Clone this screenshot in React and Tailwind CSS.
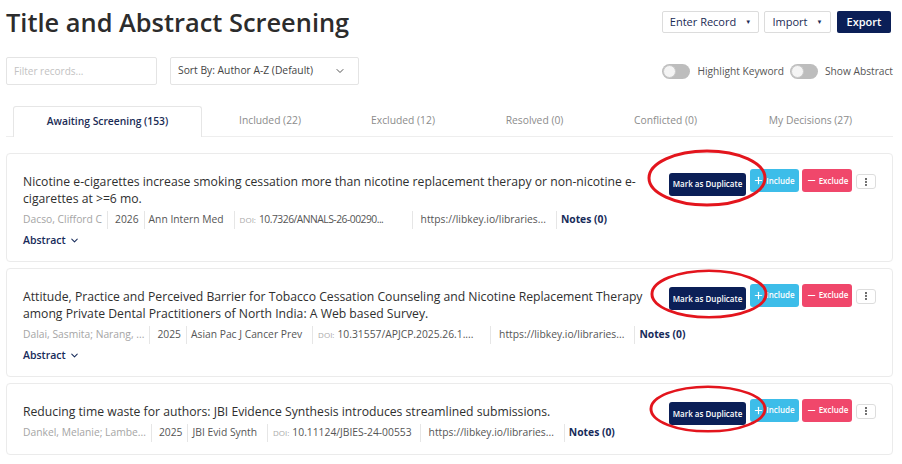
import { ChevronDown, Plus, Minus, EllipsisVertical } from "lucide-react";

const records = [
  {
    title:
      "Nicotine e-cigarettes increase smoking cessation more than nicotine replacement therapy or non-nicotine e-cigarettes at >=6 mo.",
    authors: "Dacso, Clifford C",
    year: "2026",
    journal: "Ann Intern Med",
    doi: "10.7326/ANNALS-26-00290...",
    doiText: "tracking-[-0.5px]",
    doiBox: "w-[177px]",
    abstract: true,
    ring: "left-[-22px] top-[-20px] w-[120px] h-[58px]",
  },
  {
    title:
      "Attitude, Practice and Perceived Barrier for Tobacco Cessation Counseling and Nicotine Replacement Therapy among Private Dental Practitioners of North India: A Web based Survey.",
    authors: "Dalai, Sasmita; Narang, ...",
    year: "2025",
    journal: "Asian Pac J Cancer Prev",
    doi: "10.31557/APJCP.2025.26.1....",
    doiText: "",
    doiBox: "w-[177px]",
    abstract: true,
    ring: "left-[-19px] top-[-15px] w-[118px] h-[50px]",
  },
  {
    title:
      "Reducing time waste for authors: JBI Evidence Synthesis introduces streamlined submissions.",
    authors: "Dankel, Melanie; Lambe...",
    year: "2025",
    journal: "JBI Evid Synth",
    doi: "10.11124/JBIES-24-00553",
    doiText: "",
    doiBox: "",
    abstract: false,
    ring: "left-[-20px] top-[-14px] w-[118px] h-[48px]",
  },
];

const tabs = [
  { label: "Awaiting Screening (153)", w: "w-[189px]" },
  { label: "Included (22)", w: "w-[136px]" },
  { label: "Excluded (12)", w: "w-[130px]" },
  { label: "Resolved (0)", w: "w-[133px]" },
  { label: "Conflicted (0)", w: "w-[129px]" },
  { label: "My Decisions (27)", w: "w-[161px]" },
];

const Toggle = ({ label }) => (
  <div className="flex items-center gap-[7px]">
    <div className="w-[28px] h-[15px] rounded-full bg-[#bdbdbd] flex items-center px-[1px]">
      <div className="w-[13px] h-[13px] rounded-full bg-[#f4f4f4] border border-[#c9c9c9]" />
    </div>
    <span className="text-[10.2px] text-[#555]">{label}</span>
  </div>
);

const Sep = () => <span className="w-px self-stretch shrink-0 bg-[#e6e6e6]" />;

const RecordCard = ({ rec }) => (
  <div className="border border-[#ebebeb] rounded-[4px] bg-white px-4 pt-[15px] flex gap-5 pb-[12px]">
    <div className="flex-1 min-w-0 pt-[4px]">
      <h3 className="text-[12.2px] leading-[17px] font-medium text-[#2f2f2f]">
        {rec.title}
      </h3>
      <div className="flex items-center h-[18px] mt-[4px] text-[10.3px] text-[#555] whitespace-nowrap">
        <span className="text-[#a5a5a5] shrink-0 pr-[5px]">{rec.authors}</span>
        <Sep />
        <span className="shrink-0 pl-[7px] pr-[5px]">{rec.year}</span>
        <Sep />
        <span className="shrink-0 pl-[4px] pr-[10px]">{rec.journal}</span>
        <Sep />
        <span className={`shrink-0 flex items-center pl-[5px] pr-[8px] ${rec.doiBox}`}>
          <span className="text-[8px] text-[#aaa] mr-[3px]">DOI:</span>
          <span className={rec.doiText}>{rec.doi}</span>
        </span>
        <Sep />
        <span className="shrink-0 pl-[8px] pr-[10px]">https://libkey.io/libraries...</span>
        <Sep />
        <span className="shrink-0 pl-[4px] font-bold text-[#172b5a]">Notes (0)</span>
      </div>
      {rec.abstract && (
        <div className="flex items-center gap-[3px] mt-[4px] text-[10.5px] font-semibold text-[#172b5a]">
          Abstract <ChevronDown className="w-[11px] h-[11px]" strokeWidth={2.2} />
        </div>
      )}
    </div>
    <div className="flex items-start shrink-0 gap-[3.5px]">
      <div className="relative">
        <button className="w-[77px] h-[23px] rounded-[3px] bg-[#0b1f57] text-white text-[8px] font-semibold">
          Mark as Duplicate
        </button>
        <svg
          className={`absolute pointer-events-none ${rec.ring}`}
          viewBox="0 0 120 58"
          preserveAspectRatio="none"
        >
          <ellipse
            cx="60"
            cy="29"
            rx="58"
            ry="27"
            fill="none"
            stroke="#e3151d"
            strokeWidth="3"
          />
        </svg>
      </div>
      <button className="w-[49px] h-[23px] rounded-[3px] bg-[#3dbde9] text-white text-[8px] font-semibold flex items-center justify-center gap-[2px]">
        <Plus className="w-[11px] h-[11px]" strokeWidth={2.5} />
        Include
      </button>
      <button className="w-[50px] h-[23px] rounded-[3px] bg-[#f0476b] text-white text-[8px] font-semibold flex items-center justify-center gap-[2px]">
        <Minus className="w-[11px] h-[11px]" strokeWidth={2.5} />
        Exclude
      </button>
      <button className="ml-[0.5px] mt-[5px] w-[20px] h-[15px] rounded-[3px] border border-[#ddd] bg-white flex items-center justify-center text-[#444]">
        <EllipsisVertical className="w-[10px] h-[10px]" strokeWidth={3} />
      </button>
    </div>
  </div>
);

export default function App() {
  return (
    <div className="w-[902px] h-[464px] overflow-hidden bg-white font-['Open_Sans',sans-serif] pl-[6px] pr-[9px]">
      {/* Header */}
      <div className="flex items-start justify-between pt-[4px]">
        <h1 className="text-[25.4px] leading-[36px] font-semibold text-[#2c2c2c]">
          Title and Abstract Screening
        </h1>
        <div className="flex items-center gap-[5px] mt-[7px] mr-[2px]">
          <button className="h-[22px] w-[97px] border border-[#dcdcdc] rounded-[2px] text-[11px] font-medium text-[#1a2b55] flex items-center justify-center gap-[9px]">
            Enter Record <span className="text-[6px]">▼</span>
          </button>
          <button className="h-[22px] w-[67px] border border-[#dcdcdc] rounded-[2px] text-[11px] font-medium text-[#1a2b55] flex items-center justify-center gap-[9px]">
            Import <span className="text-[6px]">▼</span>
          </button>
          <button className="h-[22px] w-[54px] rounded-[2px] bg-[#0b1f57] text-[11px] font-semibold text-white ml-[1px]">
            Export
          </button>
        </div>
      </div>

      {/* Filters */}
      <div className="flex items-center justify-between mt-[17px]">
        <div className="flex items-center gap-[13px]">
          <div className="w-[151px] h-[28px] border border-[#e4e4e4] rounded-[2px] flex items-center px-[7px] text-[10px] text-[#c2c2c2]">
            Filter records...
          </div>
          <div className="w-[189px] h-[28px] border border-[#e4e4e4] rounded-[2px] flex items-center justify-between pl-[7px] pr-[12px] text-[10.3px] text-[#444]">
            Sort By: Author A-Z (Default)
            <ChevronDown className="w-[12px] h-[12px] text-[#555]" strokeWidth={2} />
          </div>
        </div>
        <div className="flex items-center gap-[6px] mt-[2px]">
          <Toggle label="Highlight Keyword" />
          <Toggle label="Show Abstract" />
        </div>
      </div>

      {/* Tabs */}
      <div className="flex border-b border-[#eeeeee] mt-[21px] pl-[7px] h-[31px]">
        {tabs.map((t, i) => (
          <div
            key={t.label}
            className={
              i === 0
                ? `${t.w} shrink-0 flex items-center justify-center text-[10.3px] font-semibold text-[#1a2b55] border border-b-0 border-[#e6e6e6] rounded-t-[3px] bg-white -mb-px`
                : `${t.w} shrink-0 flex items-center justify-center text-[10.3px] font-medium text-[#8c8c8c]`
            }
          >
            {t.label}
          </div>
        ))}
      </div>

      {/* Records */}
      <div className="flex flex-col gap-[6px] mt-[16px]">
        {records.map((r) => (
          <RecordCard key={r.title} rec={r} />
        ))}
      </div>
    </div>
  );
}
